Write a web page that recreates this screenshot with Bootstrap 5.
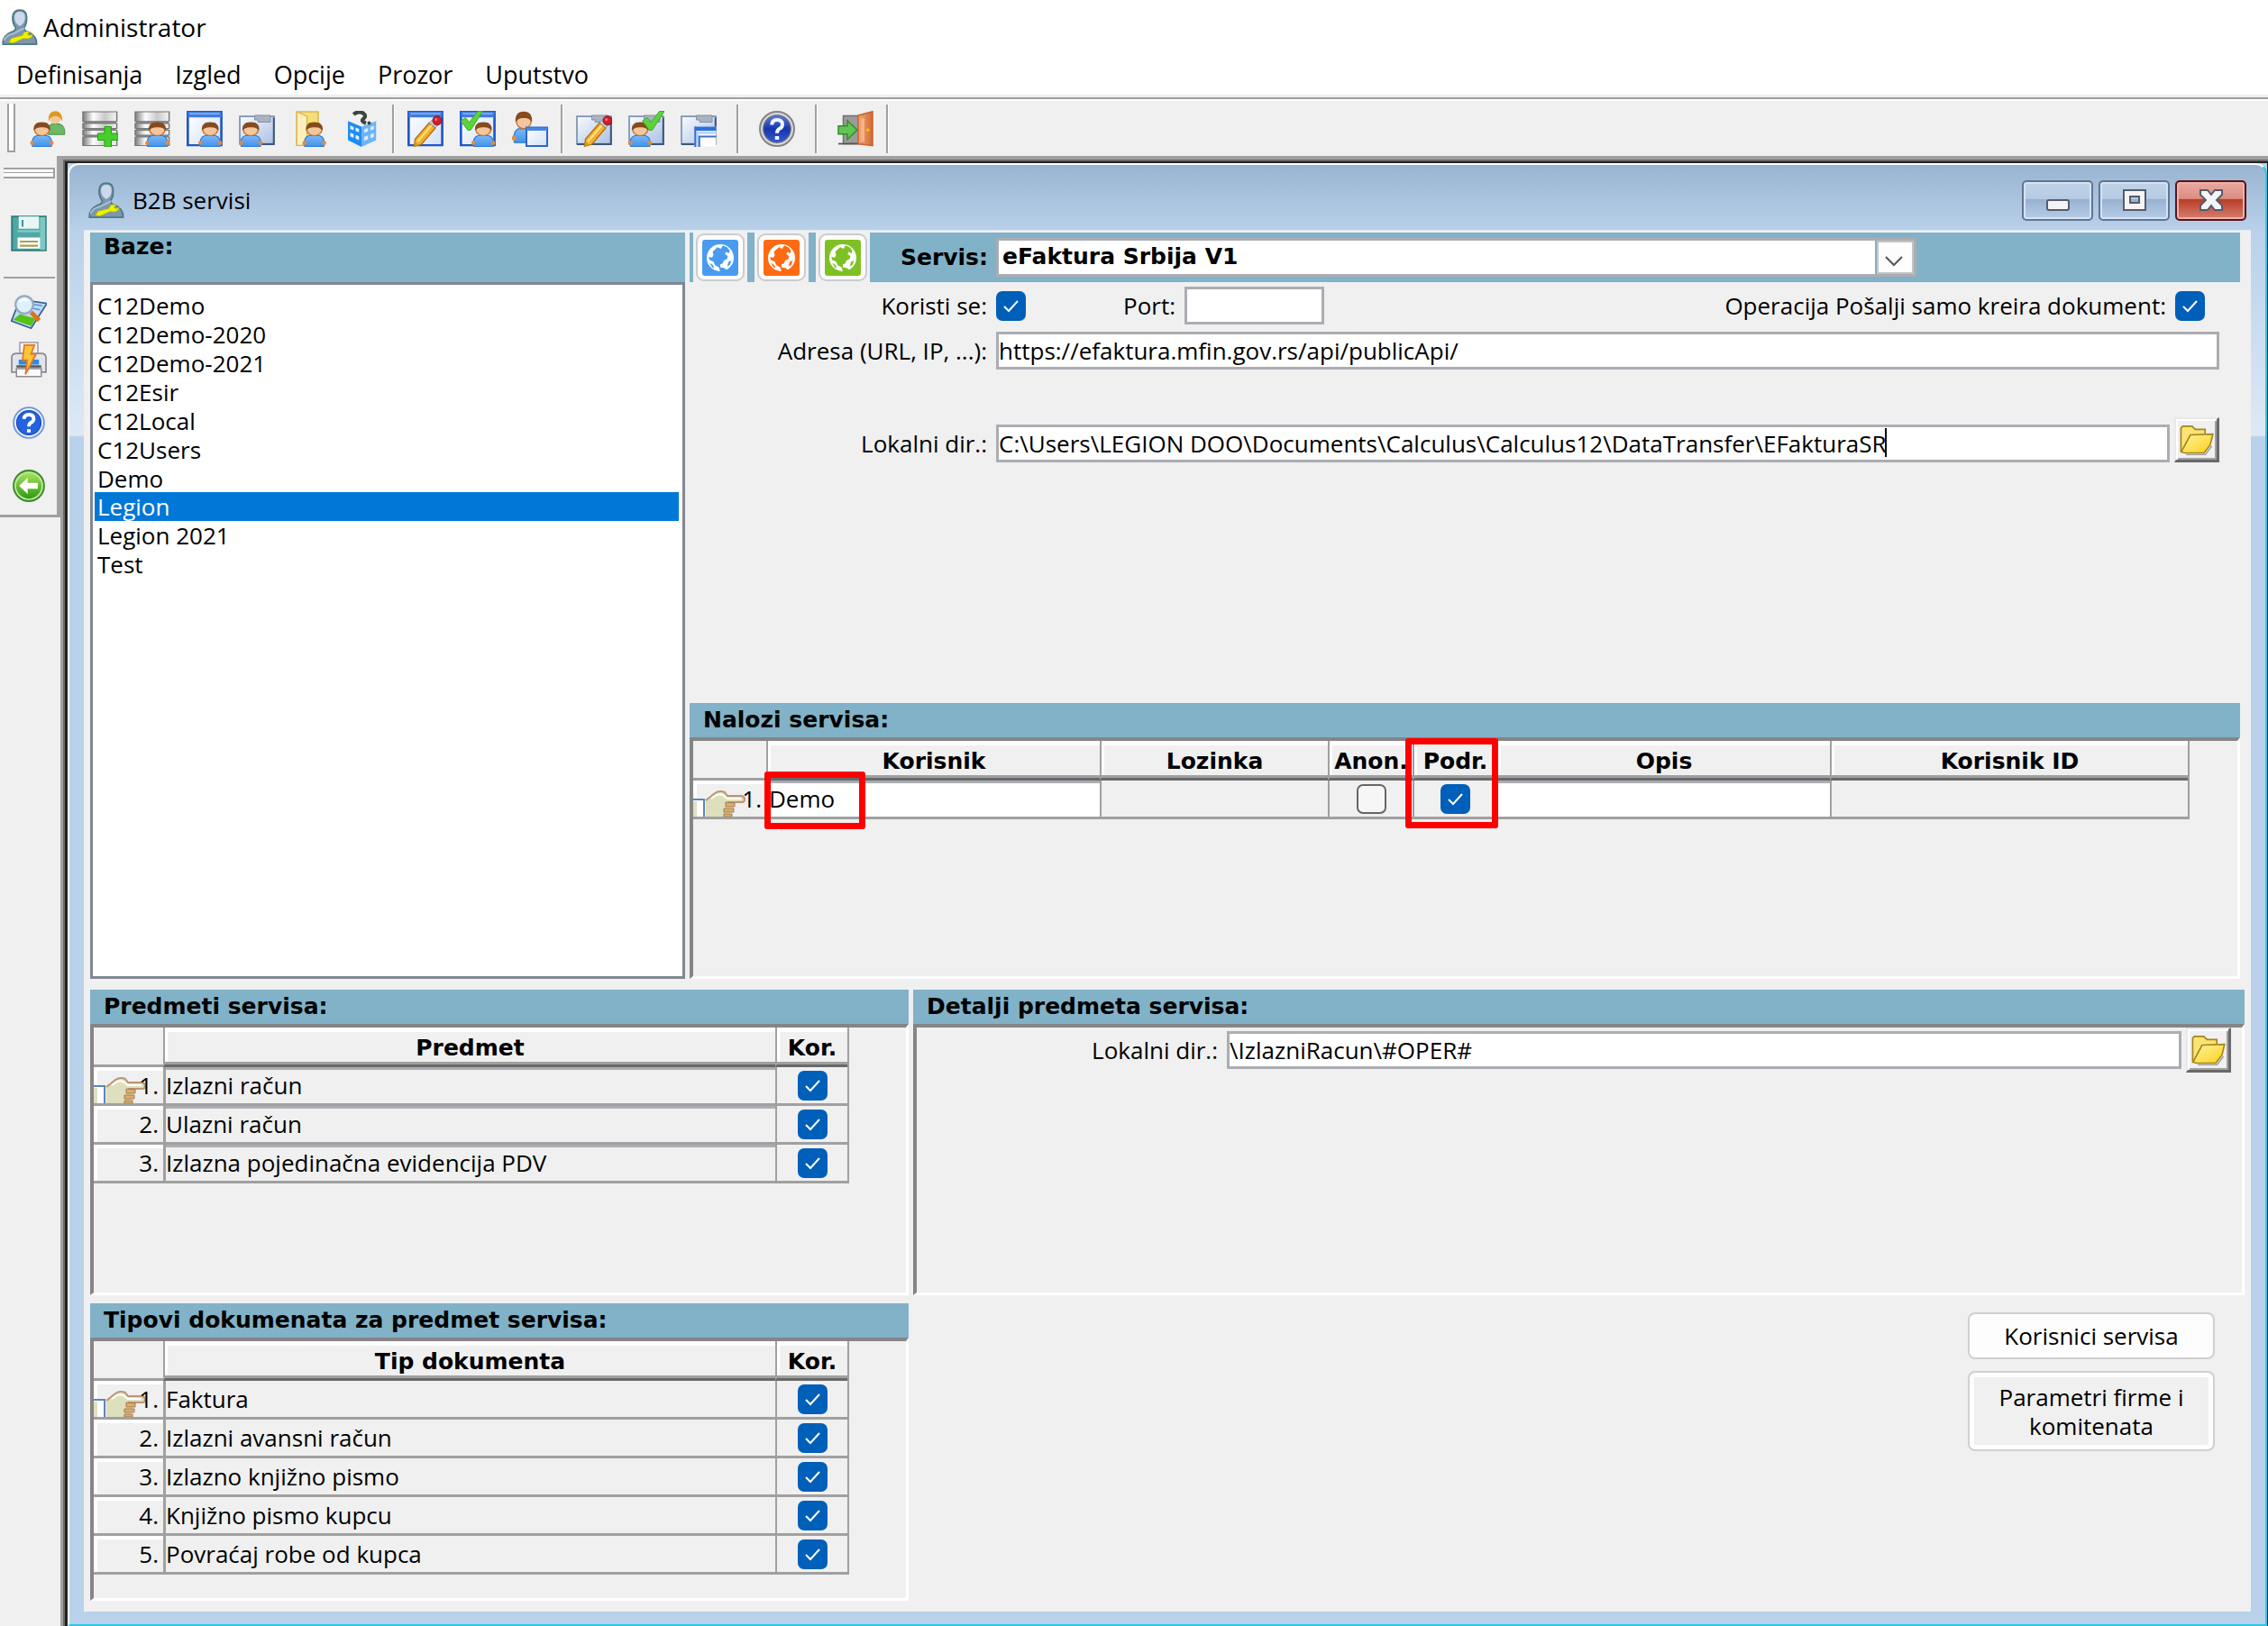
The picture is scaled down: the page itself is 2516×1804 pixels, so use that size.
<!DOCTYPE html>
<html lang="sr-Latn">
<head>
<meta charset="utf-8">
<meta name="viewport" content="width=device-width, initial-scale=1">
<title>Administrator</title>
<link href="https://cdn.jsdelivr.net/npm/bootstrap@5.3.0/dist/css/bootstrap.min.css" rel="stylesheet">
<style>
:root{--face:#f0f0f0;--teal:#81b2c7;--line:#a0a0a0;--dark:#696969;--accent:#005fb8}
body{font:26px/32px "Open Sans","Noto Sans",sans-serif;color:#000;background:var(--face)}
.strong-text,.sheet th{font-family:"DejaVu Sans",sans-serif;font-weight:700;font-size:25px}
svg{display:block;flex:none}
.bare{border:0;padding:0;background:none}
/* application header */
.app-title{height:60px;padding-left:2px;gap:6px;font-size:28px}
.app-menu{height:45px;padding-left:18px;gap:36px;font-size:27px}
.app-menu a{color:#000;text-decoration:none}
.tools{height:68px;border-top:3px solid #f0f0f0;box-shadow:inset 0 2px var(--line),inset 0 4px #fff;background:var(--face);padding:7px 0 0 8px}
.tools .grip-v{width:9px;height:54px;border:solid var(--line);border-width:0 2px 2px;background:#fff;margin-right:16px}
.tool-set{gap:18px;padding-top:1px}
.rule-v{width:3px;height:54px;margin:0 -4px;background:linear-gradient(90deg,var(--line) 67%,#fff 67%)}
/* side bar */
.side-wrap{width:67px}
.side-tools{border-right:4px solid var(--line);border-bottom:3px solid var(--line);padding:13px 0 14px 1px;height:401px}
.grip-h{width:57px;height:15px;margin-bottom:41px;border:solid var(--line);border-width:2px 2px 2px 0;background:linear-gradient(#fff 35%,var(--line) 35%,var(--line) 55%,#fff 55%)}
.rule-h{width:57px;height:3px;margin:28px 0 17px;background:var(--line)}
.side-pair{gap:13px;margin-bottom:32px}
.side-low{gap:34px}
/* inner window */
.mdi{border:solid var(--line);border-width:4px 0 0 3px;box-shadow:inset 2px 2px var(--dark);background:#222;padding:2px 0 0 2px;min-width:0}
.win{border:solid #222;border-width:2px 1px 1px 3px;background:#b9d1ea}
.win-in{border:2px solid #fff;border-right-color:#2cc9e6;border-bottom-color:#2cc9e6;border-radius:12px 12px 0 0;padding:0 16px 14px;background:linear-gradient(#99b4d1 0,#b9d1ea 73px,#dde9f5 300px,#b9d1ea 302px)}
.win-title{height:72px;padding:6px 5px 0;gap:9px}
.cap-set{gap:6px}
.cap-btn{width:79px;height:45px;border:2px solid #5f7593;border-radius:5px;background:linear-gradient(#c0d3e8 0,#b6cbe3 45%,#97b1d0 46%,#b5cde8 100%);box-shadow:inset 0 0 0 2px #d5e3f2;padding:0}
.cap-close{border-color:#5b1418;background:linear-gradient(#eaa9a0 0,#dc8d82 45%,#b93b25 46%,#d67f70 100%);box-shadow:inset 0 0 0 2px #eab2aa}
.client{background:var(--face);padding:2px 7px 12px;border-top:1px solid #dfe8f2}
.pane-row{gap:5px}
.pane-row + .pane-row{margin-top:12px}
/* panels */
.bar{background:var(--teal);height:38px;padding-left:15px}
.bar-tall{height:55px}
.sunken{border:solid;border-width:4px 3px 3px 4px;border-color:#858585 #fff #fff #858585}
.sunken + .bar{margin-top:9px}
.base-pane{width:660px}
.base-list{border:3px solid #828790;background:#fff;padding:7px 4px 0 2px;border-radius:0}
.base-list .list-group-item{border:0;padding:0 3px;line-height:32px;height:32px;color:#000;background:#fff}
.base-list .active{background:#0078d7;color:#fff}
.right-pane{padding-right:5px}
.svc-slot{width:60px;height:55px;background:var(--face);margin-right:8px}
.svc-btn{width:54px;height:53px;background:#fdfdfd;border:2px solid #ccc;border-radius:9px;padding:0}
.svc-blue{color:#4a9bf0}
.svc-orange{color:#ff6a13}
.svc-green{color:#7fc124}
.svc-label{width:131px}
.svc-select{width:1021px;height:43px;margin-left:9px;border:3px solid #abadb3;border-radius:0;padding:0 50px 2px 4px;line-height:32px;color:#000;background:#fff url("data:image/svg+xml,%3Csvg xmlns='http://www.w3.org/2000/svg' width='43' height='37'%3E%3Crect width='2' height='37' fill='%2381b2c7'/%3E%3Crect x='3' y='1' width='39' height='35' fill='%23fdfdfd' stroke='%23c4c4c4' stroke-width='2'/%3E%3Cpath d='M12 18l9 9 9-9' fill='none' stroke='%23555' stroke-width='2'/%3E%3C/svg%3E") no-repeat right center/43px 37px}
.svc-form{padding:5px 23px 0 0;min-height:467px}
.form-line{gap:10px}
.form-line-low{margin-top:53px}
.lab{width:330px;text-align:right;flex:none}
.lab-port{width:156px;text-align:right}
.lab-wide{width:334px;text-align:right;flex:none}
.field{height:42px;border:3px solid #abadb3;border-radius:0;background:#fff;padding:0 0 1px;font-size:26px;color:#000}
.field-port{width:155px}
.tick{width:33px;height:33px;border:2px solid #666;border-radius:7px!important;margin:0;background-color:#f6f6f6;flex:none}
.tick:checked{border-color:var(--accent);background:var(--accent) url("data:image/svg+xml,%3Csvg xmlns='http://www.w3.org/2000/svg' viewBox='0 0 33 33'%3E%3Cpath d='M9 17l5 5 10-11' fill='none' stroke='%23fff' stroke-width='2'/%3E%3C/svg%3E") center/33px 33px no-repeat}
.folder-btn{width:50px;height:50px;flex:none;margin-left:-5px;padding:3px;background:var(--face);border:solid;border-width:2px 3px 3px 2px;border-color:#e8e8e8 var(--dark) var(--dark) #e8e8e8;box-shadow:inset 2px 2px #fff,inset -2px -2px var(--line)}
.caret{position:absolute;left:986px;top:4px;width:2px;height:32px;background:#000}
/* data grids */
.sheet{table-layout:fixed;border-collapse:separate;border-spacing:0;border-right:2px solid var(--line)}
.sheet-accounts{width:1660px}
.sheet-small{width:838px}
.col-num{width:77px}
.col-kor{width:80px}
.sheet th{height:44px;padding:4px 0 0;text-align:center;vertical-align:middle;position:relative;border-left:2px solid var(--line);border-bottom:3px solid var(--dark);box-shadow:inset 0 -3px var(--line),inset 3px 5px #fff;white-space:nowrap;line-height:30px}
.sheet th:first-child{border-left:0;box-shadow:none;border-bottom:3px solid var(--line)}
.sheet td{height:43px;padding:0;position:relative;border-left:2px solid var(--line);border-bottom:3px solid var(--line);vertical-align:middle;white-space:nowrap}
.sheet td:first-child{border-left:0;text-align:right;padding-right:5px;box-shadow:inset 4px 4px #fff}
.sheet td:nth-child(2){border-left-width:3px}
.sheet .cell-white{background:#fff}
.sheet .cell-in{box-shadow:inset 0 3px #abadb3}
.sheet .tick{display:block;margin:0 auto}
.hand{position:absolute;left:0;bottom:0}
.num{position:relative}
.ring{position:absolute;border:7px solid #f00;border-radius:3px;z-index:2}
.ring-demo{left:-5px;top:-10px;width:112px;height:64px}
.ring-podr{left:-10px;top:-3px;width:103px;height:100px}
.h-nalozi{min-height:268px}
.h-mid{min-height:301px}
.h-low{min-height:292px}
.left-col{width:908px}
.act-set{gap:13px;padding:19px 33px 0 0}
.act{width:274px;border:2px solid #d0d0d0;border-radius:8px;background:#fdfdfd;color:#000;font-size:26px;line-height:32px}
.act-one{height:52px;padding:0}
.act-two{height:89px;padding:0 30px;background:var(--face);box-shadow:inset 0 0 0 5px #fdfdfd}
</style>
</head>
<body class="d-flex flex-column min-vh-100">
<svg width="0" height="0" class="position-absolute" aria-hidden="true">
<defs>
<linearGradient id="gt" x1="0" x2="1"><stop offset="0" stop-color="#7c7c7c"/><stop offset=".3" stop-color="#fdfdfd"/><stop offset=".65" stop-color="#c9c9c9"/><stop offset="1" stop-color="#f4f4f4"/></linearGradient>
<linearGradient id="gw" x1="0" x2="1" y2="1"><stop offset="0" stop-color="#fff"/><stop offset="1" stop-color="#d3e0f5"/></linearGradient>
<linearGradient id="gc" x1="0" x2="1" y2="1"><stop offset="0" stop-color="#fafcff"/><stop offset="1" stop-color="#a9c0e4"/></linearGradient>
<linearGradient id="gs" x1="0" y1="0" x2="0" y2="1"><stop offset="0" stop-color="#7fb6f7"/><stop offset="1" stop-color="#3d93ee"/></linearGradient>
<linearGradient id="gf" x1="0" y1="0" x2="1" y2="1"><stop offset="0" stop-color="#fff3a0"/><stop offset="1" stop-color="#fbd21a"/></linearGradient>
<linearGradient id="gb" x1="0" y1="0" x2="0" y2="1"><stop offset="0" stop-color="#5a7fe6"/><stop offset=".5" stop-color="#1636a8"/><stop offset="1" stop-color="#2f5bd8"/></linearGradient>
<linearGradient id="gg" x1="0" y1="0" x2="0" y2="1"><stop offset="0" stop-color="#a6e35a"/><stop offset="1" stop-color="#2f9a12"/></linearGradient>
<linearGradient id="gd" x1="0" x2="1"><stop offset="0" stop-color="#f5a878"/><stop offset="1" stop-color="#cf6a33"/></linearGradient>
<g id="person"><path d="M.8 11Q.2 7 2.2 6.2h3.6Q7.800 7 7.200 11z" fill="url(#gs)" stroke="#2f7fd6" stroke-width=".4"/><ellipse cx=".7" cy="9.400" rx=".7" ry="1" fill="#e08a45"/><ellipse cx="7.300" cy="9.400" rx=".7" ry="1" fill="#e08a45"/><circle cx="4" cy="3.700" r="2.500" fill="#f3c69b" stroke="#b9733b" stroke-width=".4"/><path d="M1.200 4Q.9.200 4 .200T6.800 4Q6 2.300 4 2.500 2 2.400 1.200 4z" fill="#874a1c"/></g>
<g id="db"><path d="M.5.5h11v15H.5z" fill="#8a8a8a"/><path d="M.3.400h11.400v4.300H.3zM.3 5.600h11.400v2.200H.3zM.3 8.600h11.400v2.200H.3zM.3 11.600h11.400v3.800H.3z" fill="url(#gt)" stroke="#777" stroke-width=".45"/></g>
<g id="wnd"><path d="M.4.400h11.200v14.400H.4z" fill="url(#gw)" stroke="#1f57c4" stroke-width=".8"/><path d="M.4.400h11.200v2.400H.4z" fill="#3f7be0"/><path d="M1 1h10v.5H1z" fill="#9cc0fa"/></g>
<g id="crd"><path d="M.4 2.400h15.200v12.200H.4z" fill="url(#gc)" stroke="#7b93b5" stroke-width=".7"/><path d="M15.500 3v11.800H.4" fill="none" stroke="#3c5578" stroke-width=".8"/><path d="M7 2h7v3H8.500V4H7z" fill="#a9b3c2" stroke="#8390a3" stroke-width=".4"/></g>
<g id="pencil"><path d="M3 15.700l.4-3.200 6.300-7.200 2.700 2.300-6.200 7.300z" fill="#f5b02a" stroke="#b06c0a" stroke-width=".5"/><path d="M4.500 13.600l6.200-7.200" stroke="#ffe08a" stroke-width=".8"/><path d="M9.700 5.300l1.200-1.300 2.700 2.300-1.200 1.300z" fill="#c9c9cf" stroke="#888" stroke-width=".3"/><circle cx="13.200" cy="4.300" r="2" fill="#cf1f2b" stroke="#8f0f1a" stroke-width=".4"/><circle cx="12.700" cy="3.800" r=".6" fill="#f0727a"/><path d="M3 15.700l.3-2 1.700 1.500z" fill="#c9a000"/></g>
<g id="tickg"><path d="M.5 4.500l2-1.500 1.800 2L8 .2h2.200L4.800 8.600H3.600z" fill="#5ed13c" stroke="#3dab22" stroke-width=".4"/></g>
<symbol id="i-admin" viewBox="0 0 16 16"><path d="M.5 15.600Q.2 12 4 10.300 6.600 9.500 6 8 4.700 6.500 4.800 3.500 5 .4 8 .4T11 3.500Q11.200 6.500 10 8q-.6 1.500 2 2.300 3.700 1.700 3.400 5.300z" fill="#7c95b0" stroke="#4c7c80" stroke-width=".7"/><path d="M5.600 3.500Q5.700 1.200 8 1.200t2.300 2.300Q10.400 6.500 8 7.600 5.600 6.500 5.600 3.500z" fill="#cdd8ec"/><path d="M1 14Q2 11.500 5 11l5-2.500" stroke="#a9bcd2" stroke-width=".8" fill="none"/><path d="M3.200 14.800l1-1.800 5-1.300q.2-1.700 2-1.800l1.300.3-1.200.9 1 .7 1.400-.7q-.2 1.900-2.300 2.100l-1.900-.1-4.400 2z" fill="#eef200" stroke="#b5b800" stroke-width=".3"/></symbol>
<symbol id="i-users" viewBox="0 0 16 16"><g transform="translate(7.500 0)"><path d="M.8 10.500Q.2 6.500 2.200 5.800h3.600Q8.300 6.500 8 10.500z" fill="#6cb865" stroke="#4a9444" stroke-width=".4"/><circle cx="3.800" cy="3.300" r="2.500" fill="#f3c69b"/><path d="M.8 4.800Q.6.100 3.800.100T7 4.800Q6 2.300 3.800 2.300T.8 4.800z" fill="#dd9a1e"/></g><use href="#person" transform="translate(.2 4.800) scale(1.300 1)"/></symbol>
<symbol id="i-dbadd" viewBox="0 0 16 16"><use href="#db" transform="scale(1.320 1)"/><path d="M10 7h3v3h3v3h-3v3h-3v-3H7v-3h3z" fill="#46cf2c" stroke="#25a012" stroke-width=".4"/></symbol>
<symbol id="i-dbuser" viewBox="0 0 16 16"><use href="#db" transform="scale(1.320 1)"/><use href="#person" transform="translate(4.800 4.800) scale(1.350 1)"/></symbol>
<symbol id="i-winuser" viewBox="0 0 16 16"><use href="#wnd" transform="scale(1.330 1.030)"/><use href="#person" transform="translate(5.200 4.800) scale(1.320 1)"/></symbol>
<symbol id="i-carduser" viewBox="0 0 16 16"><use href="#crd"/><use href="#person" transform="translate(0 4.800) scale(1.320 1)"/></symbol>
<symbol id="i-folduser" viewBox="0 0 16 16"><path d="M2.500.400h9.500v14.900H2.500z" fill="#f6dd7c" stroke="#d9b64a" stroke-width=".6"/><path d="M2.500.400l4.500 2v9.500l-2 3.400H2.500z" fill="#fbf0bd" stroke="#d9b64a" stroke-width=".5"/><use href="#person" transform="translate(5 4.800) scale(1.320 1)"/></symbol>
<symbol id="i-book" viewBox="0 0 16 16"><path d="M2 4.500l6 2.500v9l-6-3z" fill="#1e8df2"/><path d="M14.500 4.500L8 7v9l6.500-3z" fill="#6fb3f7"/><path d="M3 6.500l1.500.6v1.500L3 8zM5.400 7.400l1.500.6v1.500l-1.500-.6zM3 9.700l1.500.6V12L3 11.300zM5.400 10.700l1.500.6V13l-1.500-.7z" fill="#e8f4ff"/><path d="M9.200 8.200l1.700-.6v1.500l-1.700.6zM12 7.100l1.500-.5v1.500l-1.500.6zM9.200 11.500l1.700-.6v1.700l-1.700.7zM12 10.400l1.500-.6v1.700l-1.500.7z" fill="#dcecff"/><path d="M4.500 1.600Q6.500-.2 8.700 1q1.900 1.300 0 2.700Q7.700 4.600 10 5.500" fill="none" stroke="#3a4540" stroke-width="1.700"/><circle cx="11.400" cy="5.400" r=".8" fill="#3a4540"/></symbol>
<symbol id="i-winedit" viewBox="0 0 16 16"><use href="#wnd" transform="scale(1.330 1.030)"/><use href="#pencil"/></symbol>
<symbol id="i-winok" viewBox="0 0 16 16"><use href="#wnd" transform="scale(1.330 1.030)"/><use href="#person" transform="translate(5.200 4.800) scale(1.320 1)"/><use href="#tickg"/></symbol>
<symbol id="i-userwin" viewBox="0 0 16 16"><use href="#person" transform="scale(1.300 1.280)"/><path d="M6.400 7.400h9.200v8.200H6.400z" fill="url(#gw)" stroke="#2d66c9" stroke-width=".8"/><path d="M6.400 7.400h9.200v1.400H6.400z" fill="#4a86e4"/></symbol>
<symbol id="i-cardedit" viewBox="0 0 16 16"><use href="#crd"/><use href="#pencil" transform="translate(.8 0)"/></symbol>
<symbol id="i-cardok" viewBox="0 0 16 16"><use href="#crd"/><use href="#person" transform="translate(0 4.800) scale(1.320 1)"/><use href="#tickg" transform="translate(5.800 0)"/></symbol>
<symbol id="i-cardwin" viewBox="0 0 16 16"><use href="#crd"/><path d="M6.200 7h9.600v8.800H6.200z" fill="#fff"/><path d="M6.200 7h9.600v1.800H6.200z" fill="#2f6fd8"/><path d="M6.200 9h9.600v1.300H8V16H6.200z" fill="#bcd5f8"/><path d="M6.500 7v9M8.300 16v-4.600h7.500" fill="none" stroke="#3a70cc" stroke-width=".8"/></symbol>
<symbol id="i-help" viewBox="0 0 16 16"><circle cx="8" cy="8" r="7.600" fill="#d8d8dc" stroke="#84848a" stroke-width=".8"/><circle cx="8" cy="8" r="6.100" fill="url(#gb)" stroke="#6d6d78" stroke-width=".5"/><path d="M5.700 6.200Q5.700 4 8 4t2.400 2q0 1.300-1.300 1.900Q8 8.500 8 9.900" fill="none" stroke="#f2f5ff" stroke-width="1.600"/><path d="M7.100 11.200h1.800v1.600H7.100z" fill="#f2f5ff"/></symbol>
<symbol id="i-help2" viewBox="0 0 16 16"><circle cx="8" cy="8" r="7.500" fill="#e9f0ff" stroke="#6f95dd" stroke-width=".8"/><circle cx="8" cy="8" r="6" fill="#2362e0" stroke="#1a49b4" stroke-width=".5"/><path d="M5.600 6.200Q5.700 4 8 4t2.400 2q0 1.300-1.300 1.900Q8 8.500 8 9.900" fill="none" stroke="#fff" stroke-width="1.700"/><path d="M7.100 11.200h1.800v1.600H7.100z" fill="#fff"/></symbol>
<symbol id="i-exit" viewBox="0 0 16 16"><path d="M2.600 2.200h9v12.400h-9z" fill="#9b9b9b" stroke="#6f6f6f" stroke-width=".6"/><path d="M.4 14.600h9" stroke="#555" stroke-width=".7"/><path d="M9.200 2l6.400-1.700v15.200L9.200 14.600z" fill="url(#gd)" stroke="#c8622c" stroke-width=".6"/><path d="M10.500 3.500l1.500-.4v10.600l-1.500-.2z" fill="#f7b48a"/><circle cx="13.500" cy="8.500" r=".8" fill="#f7b400"/><path d="M.4 6.700h4V4.300L8.800 8.500l-4.400 4.200v-2.400h-4z" fill="#62c552" stroke="#338f28" stroke-width=".6"/></symbol>
<symbol id="i-save" viewBox="0 0 16 16"><path d="M.5.500h15v15H.5z" fill="#4fa8a4" stroke="#2d807d" stroke-width=".8"/><path d="M3.500.500h9v5.400h-9z" fill="#e6f6f5"/><path d="M5.200 2v3" stroke="#3a9692" stroke-width=".8"/><path d="M13 .8h2.300v14.500H13z" fill="#7cc8c4"/><path d="M3 9.800h10v4.900H3z" fill="#fff"/><path d="M4 11.200h8v.8H4zM4 13h8v.9H4z" fill="#a79f53"/><path d="M3 6.500h10v1H3z" fill="#80cac6"/></symbol>
<symbol id="i-preview" viewBox="0 0 16 16"><path d="M4 2.500l12 1.800-4.500 7-2.500 4L.3 12z" fill="#bfdcf8" stroke="#3a5f92" stroke-width=".7"/><path d="M1 11.500l3-2.500 7 2-2 3.300z" fill="#54c313"/><path d="M9 4.500l5 .8M10 6.500l3 .6" stroke="#5a8fe8" stroke-width=".6"/><circle cx="6" cy="4.800" r="3.900" fill="#dcf0fe" stroke="#97a9bd" stroke-width=".9"/><path d="M4 3.500Q5.500 2 7.500 3" fill="none" stroke="#fff" stroke-width="1"/><path d="M9 8.200l3.600 3.600" stroke="#e2701c" stroke-width="1.900"/></symbol>
<symbol id="i-print" viewBox="0 0 16 16"><path d="M4 .400h8v6H4z" fill="#f4f4f8" stroke="#9a9aa5" stroke-width=".6"/><path d="M.4 7Q.5 5.200 2.500 5.200h11q2 0 2.100 1.800v6.500H.4z" fill="#e3e3ea" stroke="#8b8b98" stroke-width=".7"/><path d="M3.500 8h9v2.200h-9z" fill="#2b8bea"/><path d="M2.500 11h11" stroke="#555" stroke-width="1"/><path d="M2.500 12h11v3.500h-11z" fill="#fafafa" stroke="#8b8b98" stroke-width=".6"/><path d="M6 1.500h4.500L9 5.500h2.200L6.500 14.500l.8-6.300H5.200z" fill="#fcc536" stroke="#e0782a" stroke-width=".7"/></symbol>
<symbol id="i-back" viewBox="0 0 16 16"><circle cx="8" cy="8" r="7.500" fill="#c4ecac" stroke="#3f8a2a" stroke-width=".9"/><circle cx="8" cy="8" r="6.300" fill="url(#gg)"/><path d="M3.200 8l4.200-4v2.600h5v2.800h-5V12z" fill="#fff"/></symbol>
<symbol id="i-globe" viewBox="0 0 16 16"><rect width="16" height="16" rx="1.300" fill="currentColor"/><circle cx="8" cy="8" r="6" fill="#fff"/><path d="M6.800 3.300l1.500.7.900-1.500 1.900.9 1.100 1.400-.3 1.200-1.300-.6-.5.9 1.200.9-.2 1.300-1.500.7-.5 1.300-1.200.5.200 1.300 1.600.2 1.300 1-1.500.6H8l-.6-1.900-1.700-.9-.7-1.600-1.700-.7-.4-1.400 1.500.3.600-1.100-.4-1.500 1-.9z" fill="currentColor"/><path d="M3.200 10.300l1.600.9.500 1.500-.8-.4zM11.600 9.800l1.400-.6-.7 1.900-1.200.8z" fill="currentColor"/></symbol>
<symbol id="i-folder" viewBox="0 0 16 16"><path d="M.6 13.500V2.500l.8-.9h4.400l1.500 1.500h4.600v2" fill="#f9e373" stroke="#a5841c" stroke-width=".7"/><path d="M.7 13.700L5 5.700l10.500-.4-1.200 5-2.900 3.800H2.500z" fill="url(#gf)" stroke="#a5841c" stroke-width=".7"/><path d="M3 14.900h9l3-4" fill="none" stroke="#999" stroke-width=".6"/></symbol>
<symbol id="i-hand" viewBox="0 0 58 30"><path d="M0 11h13v19H0z" fill="#fff"/><path d="M0 11h13M12 11v19" stroke="#5b86bf" stroke-width="2" fill="none"/><path d="M0 13h4v17H0z" fill="#dfe0c4"/><path d="M14 12L24 4q5-3.500 11-1l3 4h16q3 1 3 4t-3 3H44v5l-3 3v8H14z" fill="#dedfbd"/><path d="M14 12L24 4q5-3.500 11-1l3 4h16q3 1 3 4t-3 3H38" fill="none" stroke="#bc9573" stroke-width="2"/><path d="M20 10l6-4q5-2 8 1l4 3h15" fill="none" stroke="#fff" stroke-width="2"/><path d="M36 14l10 1v4H36zM34 21h11v4H34zM34 27h9v3h-9z" fill="#dcae68" stroke="#a37c55" stroke-width="1"/></symbol>
</defs>
</svg>

<header class="bg-white">
  <div class="app-title d-flex align-items-center"><svg width="40" height="40"><use href="#i-admin"/></svg><span>Administrator</span></div>
  <nav class="app-menu d-flex align-items-center" aria-label="Meni">
    <a href="#">Definisanja</a><a href="#">Izgled</a><a href="#">Opcije</a><a href="#">Prozor</a><a href="#">Uputstvo</a>
  </nav>
  <div class="tools d-flex align-items-start" role="toolbar" aria-label="Alati">
    <span class="grip-v"></span>
    <div class="tool-set d-flex align-items-center">
      <button class="bare" aria-label="Korisnici"><svg width="40" height="40"><use href="#i-users"/></svg></button>
      <button class="bare" aria-label="Nova baza"><svg width="40" height="40"><use href="#i-dbadd"/></svg></button>
      <button class="bare" aria-label="Korisnici baze"><svg width="40" height="40"><use href="#i-dbuser"/></svg></button>
      <button class="bare" aria-label="Forme korisnika"><svg width="40" height="40"><use href="#i-winuser"/></svg></button>
      <button class="bare" aria-label="Kartice korisnika"><svg width="40" height="40"><use href="#i-carduser"/></svg></button>
      <button class="bare" aria-label="Folder korisnika"><svg width="40" height="40"><use href="#i-folduser"/></svg></button>
      <button class="bare" aria-label="Knjiga"><svg width="40" height="40"><use href="#i-book"/></svg></button>
      <span class="rule-v"></span>
      <button class="bare" aria-label="Izmena forme"><svg width="40" height="40"><use href="#i-winedit"/></svg></button>
      <button class="bare" aria-label="Potvrda forme"><svg width="40" height="40"><use href="#i-winok"/></svg></button>
      <button class="bare" aria-label="Forma"><svg width="40" height="40"><use href="#i-userwin"/></svg></button>
      <span class="rule-v"></span>
      <button class="bare" aria-label="Izmena kartice"><svg width="40" height="40"><use href="#i-cardedit"/></svg></button>
      <button class="bare" aria-label="Potvrda kartice"><svg width="40" height="40"><use href="#i-cardok"/></svg></button>
      <button class="bare" aria-label="Kartica"><svg width="40" height="40"><use href="#i-cardwin"/></svg></button>
      <span class="rule-v ms-1"></span>
      <button class="bare mx-2" aria-label="Uputstvo"><svg width="40" height="40"><use href="#i-help"/></svg></button>
      <span class="rule-v"></span>
      <button class="bare ms-2" aria-label="Izlaz"><svg width="40" height="40"><use href="#i-exit"/></svg></button>
      <span class="rule-v"></span>
    </div>
  </div>
</header>

<div class="d-flex flex-grow-1">
  <aside class="side-wrap flex-shrink-0">
    <div class="side-tools d-flex flex-column align-items-center">
      <span class="grip-h"></span>
      <button class="bare" aria-label="Snimi"><svg width="40" height="40"><use href="#i-save"/></svg></button>
      <span class="rule-h"></span>
      <div class="side-pair d-flex flex-column">
        <button class="bare" aria-label="Pregled"><svg width="40" height="40"><use href="#i-preview"/></svg></button>
        <button class="bare" aria-label="Štampa"><svg width="40" height="40"><use href="#i-print"/></svg></button>
      </div>
      <div class="side-low d-flex flex-column">
        <button class="bare" aria-label="Pomoć"><svg width="36" height="36"><use href="#i-help2"/></svg></button>
        <button class="bare" aria-label="Nazad"><svg width="36" height="36"><use href="#i-back"/></svg></button>
      </div>
    </div>
  </aside>

  <main class="mdi flex-grow-1 d-flex">
    <section class="win flex-grow-1 d-flex">
      <div class="win-in flex-grow-1 d-flex flex-column">
        <div class="win-title d-flex align-items-center">
          <svg width="40" height="40"><use href="#i-admin"/></svg><span class="me-auto">B2B servisi</span>
          <div class="cap-set d-flex">
            <button class="cap-btn" aria-label="Umanji"><svg class="mx-auto" width="28" height="26"><rect x="2" y="13" width="24" height="11" rx="2" fill="#f4f4f4" stroke="#565b6b" stroke-width="2"/></svg></button>
            <button class="cap-btn" aria-label="Uvećaj"><svg class="mx-auto" width="28" height="26"><path d="M2 2h24v22H2zM9 9v7h10V9z" fill="#f4f4f4" fill-rule="evenodd" stroke="#565b6b" stroke-width="2"/></svg></button>
            <button class="cap-btn cap-close" aria-label="Zatvori"><svg class="mx-auto" width="28" height="26"><path d="M2 2h8l4 5 4-5h8v5l-6 6 6 6v5h-8l-4-5-4 5H2v-5l6-6-6-6z" fill="#f4f4f4" stroke="#565b6b" stroke-width="2"/></svg></button>
          </div>
        </div>

        <div class="client flex-grow-1">
          <div class="pane-row d-flex">
            <section class="base-pane d-flex flex-column flex-shrink-0">
              <div class="bar bar-tall strong-text">Baze:</div>
              <div class="base-list list-group flex-grow-1">
                <button class="list-group-item list-group-item-action">C12Demo</button>
                <button class="list-group-item list-group-item-action">C12Demo-2020</button>
                <button class="list-group-item list-group-item-action">C12Demo-2021</button>
                <button class="list-group-item list-group-item-action">C12Esir</button>
                <button class="list-group-item list-group-item-action">C12Local</button>
                <button class="list-group-item list-group-item-action">C12Users</button>
                <button class="list-group-item list-group-item-action">Demo</button>
                <button class="list-group-item list-group-item-action active" aria-current="true">Legion</button>
                <button class="list-group-item list-group-item-action">Legion 2021</button>
                <button class="list-group-item list-group-item-action">Test</button>
              </div>
            </section>

            <section class="right-pane flex-grow-1">
              <div class="bar bar-tall d-flex align-items-center ps-1">
                <span class="svc-slot d-flex align-items-center justify-content-center"><button class="svc-btn svc-blue" aria-label="Servis 1"><svg class="mx-auto" width="40" height="40"><use href="#i-globe"/></svg></button></span>
                <span class="svc-slot d-flex align-items-center justify-content-center"><button class="svc-btn svc-orange" aria-label="Servis 2"><svg class="mx-auto" width="40" height="40"><use href="#i-globe"/></svg></button></span>
                <span class="svc-slot d-flex align-items-center justify-content-center me-0"><button class="svc-btn svc-green" aria-label="Servis 3"><svg class="mx-auto" width="40" height="40"><use href="#i-globe"/></svg></button></span>
                <label class="svc-label strong-text text-end" for="svc">Servis:</label>
                <select id="svc" class="form-select svc-select strong-text"><option>eFaktura Srbija V1</option></select>
              </div>
              <div class="svc-form">
                <div class="form-line d-flex align-items-center mb-2">
                  <label class="lab" for="use">Koristi se:</label>
                  <input id="use" class="form-check-input tick" type="checkbox" checked>
                  <label class="lab-port" for="port">Port:</label>
                  <input id="port" class="form-control field field-port" type="text">
                  <label class="ms-auto" for="only">Operacija Pošalji samo kreira dokument:</label>
                  <input id="only" class="form-check-input tick me-3" type="checkbox" checked>
                </div>
                <div class="form-line d-flex align-items-center">
                  <label class="lab" for="url">Adresa (URL, IP, ...):</label>
                  <input id="url" class="form-control field" type="text" value="https://efaktura.mfin.gov.rs/api/publicApi/">
                </div>
                <div class="form-line form-line-low d-flex align-items-center">
                  <label class="lab pt-2" for="dir">Lokalni dir.:</label>
                  <div class="position-relative flex-grow-1 pt-2"><input id="dir" class="form-control field" type="text" value="C:\Users\LEGION DOO\Documents\Calculus\Calculus12\DataTransfer\EFakturaSR"><span class="caret mt-2"></span></div>
                  <button class="folder-btn" aria-label="Izaberi folder"><svg class="mx-auto" width="40" height="38"><use href="#i-folder"/></svg></button>
                </div>
              </div>
              <div class="bar strong-text d-flex align-items-center">Nalozi servisa:</div>
              <div class="sunken h-nalozi">
                <table class="sheet sheet-accounts">
                  <colgroup><col width="81"><col width="370"><col width="253"><col width="94"><col width="93"><col width="370"><col></colgroup>
                  <thead><tr><th></th><th>Korisnik</th><th>Lozinka</th><th>Anon.</th><th>Podr.<span class="ring ring-podr"></span></th><th>Opis</th><th>Korisnik ID</th></tr></thead>
                  <tbody><tr><td><svg class="hand" width="58" height="30"><use href="#i-hand"/></svg><span class="num">1.</span></td><td class="cell-white cell-in">Demo<span class="ring ring-demo"></span></td><td></td><td><input class="form-check-input tick" type="checkbox" aria-label="Anon."></td><td><input class="form-check-input tick" type="checkbox" aria-label="Podr." checked></td><td class="cell-white cell-in"></td><td></td></tr></tbody>
                </table>
              </div>
            </section>
          </div>

          <div class="pane-row d-flex">
            <div class="left-col flex-shrink-0">
              <div class="bar strong-text d-flex align-items-center">Predmeti servisa:</div>
              <div class="sunken h-mid">
                <table class="sheet sheet-small">
                  <colgroup><col class="col-num"><col><col class="col-kor"></colgroup>
                  <thead><tr><th></th><th>Predmet</th><th>Kor.</th></tr></thead>
                  <tbody>
                    <tr><td><svg class="hand" width="58" height="30"><use href="#i-hand"/></svg><span class="num">1.</span></td><td class="cell-in">Izlazni račun</td><td><input class="form-check-input tick" type="checkbox" aria-label="Izlazni račun" checked></td></tr>
                    <tr><td>2.</td><td class="cell-in">Ulazni račun</td><td><input class="form-check-input tick" type="checkbox" aria-label="Ulazni račun" checked></td></tr>
                    <tr><td>3.</td><td class="cell-in">Izlazna pojedinačna evidencija PDV</td><td><input class="form-check-input tick" type="checkbox" aria-label="Izlazna pojedinačna evidencija PDV" checked></td></tr>
                  </tbody>
                </table>
              </div>
              <div class="bar strong-text d-flex align-items-center">Tipovi dokumenata za predmet servisa:</div>
              <div class="sunken h-low">
                <table class="sheet sheet-small">
                  <colgroup><col class="col-num"><col><col class="col-kor"></colgroup>
                  <thead><tr><th></th><th>Tip dokumenta</th><th>Kor.</th></tr></thead>
                  <tbody>
                    <tr><td><svg class="hand" width="58" height="30"><use href="#i-hand"/></svg><span class="num">1.</span></td><td>Faktura</td><td><input class="form-check-input tick" type="checkbox" aria-label="Faktura" checked></td></tr>
                    <tr><td>2.</td><td>Izlazni avansni račun</td><td><input class="form-check-input tick" type="checkbox" aria-label="Izlazni avansni račun" checked></td></tr>
                    <tr><td>3.</td><td>Izlazno knjižno pismo</td><td><input class="form-check-input tick" type="checkbox" aria-label="Izlazno knjižno pismo" checked></td></tr>
                    <tr><td>4.</td><td>Knjižno pismo kupcu</td><td><input class="form-check-input tick" type="checkbox" aria-label="Knjižno pismo kupcu" checked></td></tr>
                    <tr><td>5.</td><td>Povraćaj robe od kupca</td><td><input class="form-check-input tick" type="checkbox" aria-label="Povraćaj robe od kupca" checked></td></tr>
                  </tbody>
                </table>
              </div>
            </div>
            <div class="flex-grow-1">
              <div class="bar strong-text d-flex align-items-center">Detalji predmeta servisa:</div>
              <div class="sunken h-mid">
                <div class="form-line d-flex align-items-center pe-2">
                  <label class="lab-wide" for="sub">Lokalni dir.:</label>
                  <input id="sub" class="form-control field" type="text" value="\IzlazniRacun\#OPER#">
                  <button class="folder-btn me-1" aria-label="Izaberi folder"><svg class="mx-auto" width="40" height="38"><use href="#i-folder"/></svg></button>
                </div>
              </div>
              <div class="act-set d-flex flex-column align-items-end">
                <button class="act act-one">Korisnici servisa</button>
                <button class="act act-two">Parametri firme i komitenata</button>
              </div>
            </div>
          </div>
        </div>
      </div>
    </section>
  </main>
</div>
<script src="https://cdn.jsdelivr.net/npm/bootstrap@5.3.0/dist/js/bootstrap.bundle.min.js"></script>
</body>
</html>
